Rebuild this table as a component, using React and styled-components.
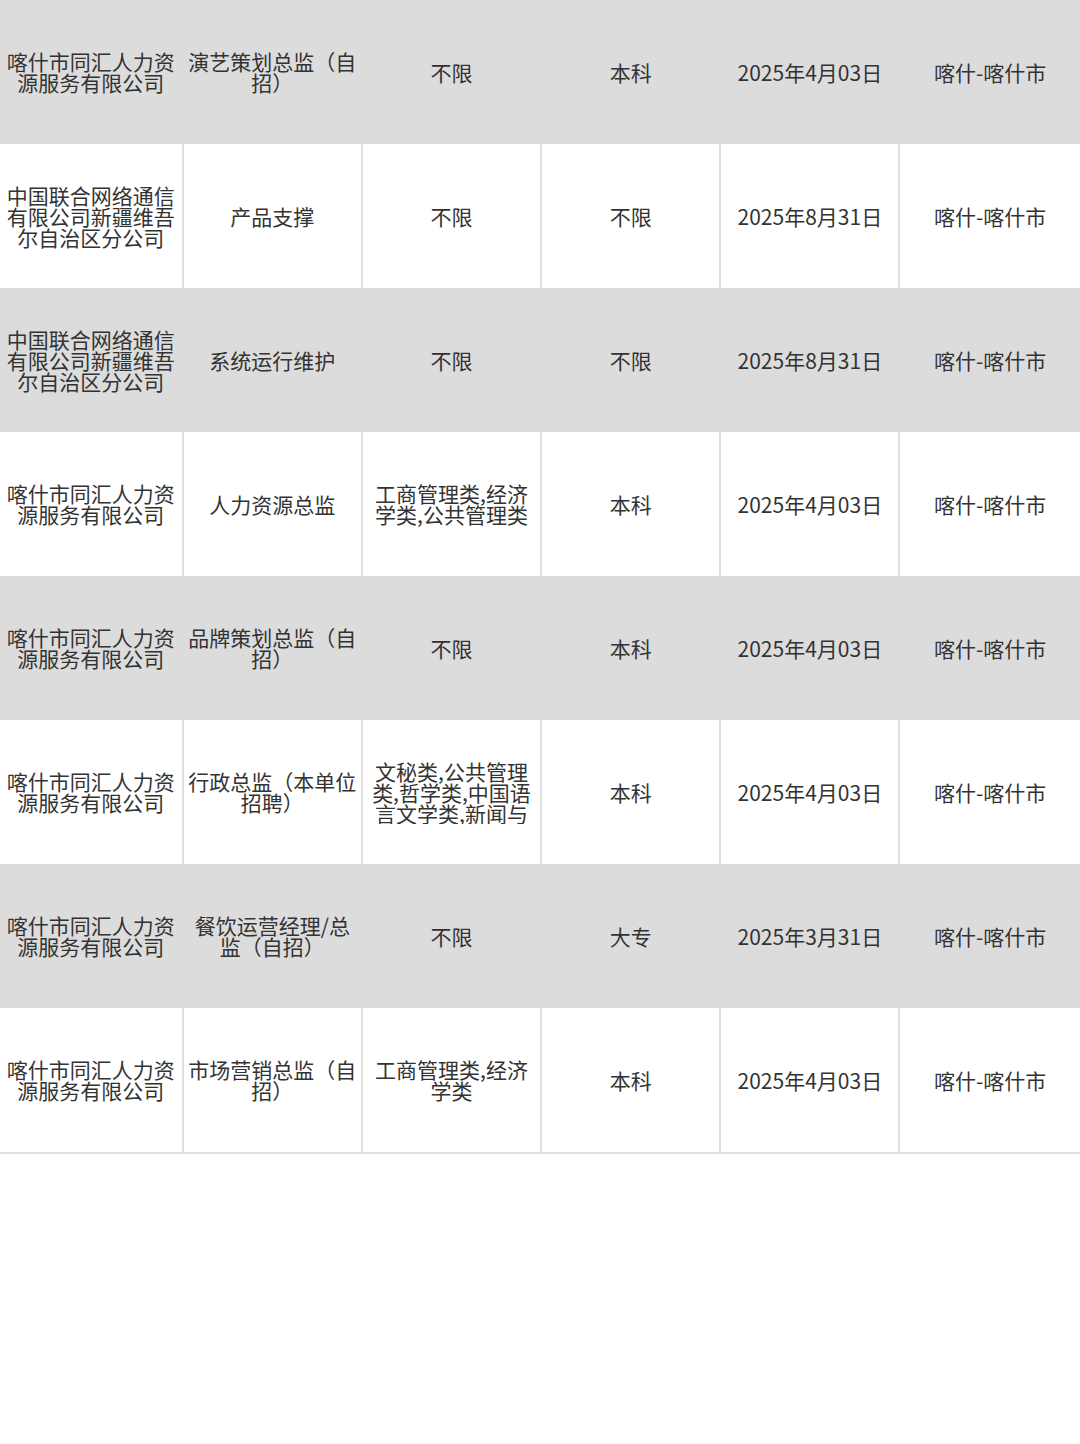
import React from 'react';
import styled, { createGlobalStyle } from 'styled-components';

const GlobalStyle = createGlobalStyle`
  html, body {
    margin: 0;
    padding: 0;
    background: #ffffff;
  }
  body {
    font-family: "Noto Sans CJK SC", "Noto Sans", sans-serif;
  }
`;

const Table = styled.div`
  width: 1080px;
  display: flex;
  flex-direction: column;
  border-bottom: 2px solid #e0e0e0;
`;

const Row = styled.div`
  display: grid;
  grid-template-columns: 183.7px repeat(4, 179.2px) 1fr;
  height: 144px;
  background-color: ${p => (p.$shaded ? '#dcdcdc' : '#ffffff')};
`;

const Cell = styled.div`
  display: flex;
  align-items: center;
  justify-content: center;
  padding: 0 3px;
  border-right: 2px solid ${p => (p.$shaded ? '#dcdcdc' : '#e0e0e0')};
  &:last-child {
    border-right: none;
  }
`;

const CellText = styled.div`
  font-size: 21px;
  line-height: 21px;
  color: #333333;
  text-align: center;
  word-break: break-all;
  ${p => p.$clip && `
    max-height: 63px;
    overflow: hidden;
  `}
`;

const jobs = [
  ['喀什市同汇人力资源服务有限公司', '演艺策划总监（自招）', '不限', '本科', '2025年4月03日', '喀什-喀什市'],
  ['中国联合网络通信有限公司新疆维吾尔自治区分公司', '产品支撑', '不限', '不限', '2025年8月31日', '喀什-喀什市'],
  ['中国联合网络通信有限公司新疆维吾尔自治区分公司', '系统运行维护', '不限', '不限', '2025年8月31日', '喀什-喀什市'],
  ['喀什市同汇人力资源服务有限公司', '人力资源总监', '工商管理类,经济学类,公共管理类', '本科', '2025年4月03日', '喀什-喀什市'],
  ['喀什市同汇人力资源服务有限公司', '品牌策划总监（自招）', '不限', '本科', '2025年4月03日', '喀什-喀什市'],
  ['喀什市同汇人力资源服务有限公司', '行政总监（本单位招聘）', '文秘类,公共管理类,哲学类,中国语言文学类,新闻与传播学类', '本科', '2025年4月03日', '喀什-喀什市'],
  ['喀什市同汇人力资源服务有限公司', '餐饮运营经理/总监（自招）', '不限', '大专', '2025年3月31日', '喀什-喀什市'],
  ['喀什市同汇人力资源服务有限公司', '市场营销总监（自招）', '工商管理类,经济学类', '本科', '2025年4月03日', '喀什-喀什市'],
];

const App = () => (
  <>
    <GlobalStyle />
    <Table>
      {jobs.map((job, i) => (
        <Row key={i} $shaded={i % 2 === 0}>
          {job.map((text, j) => (
            <Cell key={j} $shaded={i % 2 === 0}>
              <CellText $clip={j === 2 && text.length > 24}>{text}</CellText>
            </Cell>
          ))}
        </Row>
      ))}
    </Table>
  </>
);

export default App;
